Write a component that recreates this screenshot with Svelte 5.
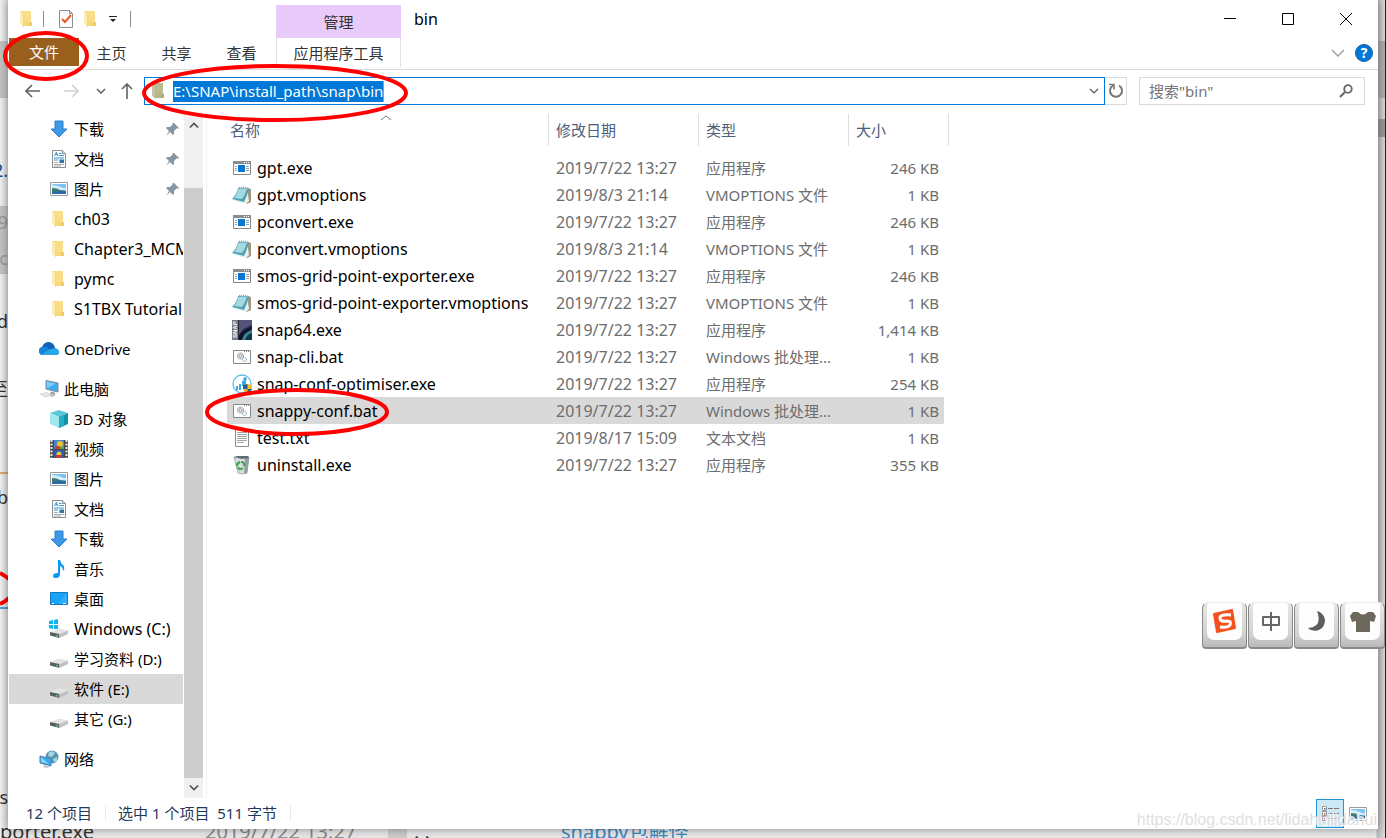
<script>
  const tabs = ['主页', '共享', '查看'];

  const tree = [
    { label: '下载', icon: 'download', pin: true },
    { label: '文档', icon: 'document', pin: true },
    { label: '图片', icon: 'picture', pin: true },
    { label: 'ch03', icon: 'folder', latin: true },
    { label: 'Chapter3_MCMC', icon: 'folder', latin: true },
    { label: 'pymc', icon: 'folder', latin: true },
    { label: 'S1TBX Tutorial', icon: 'folder', latin: true },
    { label: 'OneDrive', icon: 'onedrive', root: true },
    { label: '此电脑', icon: 'computer', root: true },
    { label: '3D 对象', icon: 'cube' },
    { label: '视频', icon: 'video' },
    { label: '图片', icon: 'picture' },
    { label: '文档', icon: 'document' },
    { label: '下载', icon: 'download' },
    { label: '音乐', icon: 'music' },
    { label: '桌面', icon: 'desktop' },
    { label: 'Windows (C:)', icon: 'windrive', latin: true },
    { label: '学习资料 (D:)', icon: 'drive' },
    { label: '软件 (E:)', icon: 'drive', selected: true },
    { label: '其它 (G:)', icon: 'drive' },
    { label: '网络', icon: 'network', root: true }
  ];

  const files = [
    { name: 'gpt.exe', icon: 'exe', date: '2019/7/22 13:27', type: '应用程序', size: '246 KB' },
    { name: 'gpt.vmoptions', icon: 'notepad', date: '2019/8/3 21:14', type: 'VMOPTIONS 文件', size: '1 KB' },
    { name: 'pconvert.exe', icon: 'exe', date: '2019/7/22 13:27', type: '应用程序', size: '246 KB' },
    { name: 'pconvert.vmoptions', icon: 'notepad', date: '2019/8/3 21:14', type: 'VMOPTIONS 文件', size: '1 KB' },
    { name: 'smos-grid-point-exporter.exe', icon: 'exe', date: '2019/7/22 13:27', type: '应用程序', size: '246 KB' },
    { name: 'smos-grid-point-exporter.vmoptions', icon: 'notepad', date: '2019/7/22 13:27', type: 'VMOPTIONS 文件', size: '1 KB' },
    { name: 'snap64.exe', icon: 'snap', date: '2019/7/22 13:27', type: '应用程序', size: '1,414 KB' },
    { name: 'snap-cli.bat', icon: 'bat', date: '2019/7/22 13:27', type: 'Windows 批处理...', size: '1 KB' },
    { name: 'snap-conf-optimiser.exe', icon: 'optimiser', date: '2019/7/22 13:27', type: '应用程序', size: '254 KB' },
    { name: 'snappy-conf.bat', icon: 'bat', date: '2019/7/22 13:27', type: 'Windows 批处理...', size: '1 KB', selected: true },
    { name: 'test.txt', icon: 'text', date: '2019/8/17 15:09', type: '文本文档', size: '1 KB' },
    { name: 'uninstall.exe', icon: 'bin', date: '2019/7/22 13:27', type: '应用程序', size: '355 KB' }
  ];
</script>

{#snippet icon(name)}
  <svg class="icon" viewBox="0 0 20 20" aria-hidden="true">
    {#if name === 'folder'}
      <path d="M3 2h11v11h1v4H6z" fill="#f8d778" />
      <path d="M7 2h7v11H7z" fill="#fadd8a" />
      <path d="M12 13h3v4h-3z" fill="#f2ca66" />
      <path d="M3 2l4 2v14l-4-3z" fill="#fdebb0" />
      <path d="M6.500 4v14" stroke="#f0cd70" stroke-width=".6" />
    {:else if name === 'download'}
      <path d="M6 2h8v8h4l-8 8-8-8h4z" fill="#3d99e8" stroke="#2c7fcb" />
    {:else if name === 'document'}
      <path d="M3.500 1.500h10l3 3v14h-13z" fill="#fbfcfd" stroke="#8d9092" />
      <path d="M13.500 1.500v3h3" fill="#ddd" stroke="#8d9092" />
      <path d="M5.500 7l2-4 1 4M6.500 5.500h2M10 4.500h2.500M10 6.500h5M5 9h10M5 11h4" fill="none" stroke="#3a96d2" />
      <path d="M5 13.500h4M5 15.500h10M5 17h7" stroke="#9a9a9a" stroke-width=".8" />
      <path d="M10.500 10.500H15V14h-4.500z" fill="#37749d" />
    {:else if name === 'picture'}
      <path d="M1.500 3.500h17v13h-17z" fill="#fff" stroke="#9a9da0" />
      <path d="M3 5h14v10H3z" fill="#7fc3f5" />
      <path d="M3 6q5 0 9 2t5 1v2H3z" fill="#d4edfb" />
      <path d="M3 9q5 0 8 2l6 1v3H3z" fill="#3f7b6d" />
      <path d="M3 13q7-2 14 0v2H3z" fill="#2a6ba8" />
    {:else if name === 'onedrive'}
      <path d="M4 16a4 4 0 0 1 0-8q2-5 7-4 4 0 5 5 4 1 4 4 0 3-3 3z" fill="#1490df" />
      <path d="M3 8q2-5 7-5 4 0 6 6l-4 2-5-3z" fill="#0f62b8" />
      <path d="M0 12q0-4 4-4 3 0 6 3l-7 5q-3-1-3-4" fill="#1684d8" />
      <path d="M3 15l9-5q5-2 8 2 0 4-3 4H4z" fill="#28a8ea" />
    {:else if name === 'computer'}
      <path d="M7 1.500l12 2.500v9L7 10z" fill="#3eaaf0" stroke="#7d8a95" />
      <path d="M7.500 2.500l9 2L8 9.500z" fill="#7fcbfa" />
      <path d="M12 12.500l4 1v2.500l-5-1z" fill="#9aa3aa" />
      <path d="M9 16l5-1 3 1-4 2z" fill="#b9c0c5" />
      <path d="M1 15l7-1.500 4 2.500-6 2z" fill="#e3e7ea" stroke="#c0c6ca" stroke-width=".6" />
    {:else if name === 'cube'}
      <path d="M10 1l9 3-9 4-9-4z" fill="#5ac8d8" />
      <path d="M1 4l9 4v11l-9-4z" fill="#a0e8ec" />
      <path d="M10 8l9-4v11l-9 4z" fill="#0c93aa" />
      <path d="M10 8l5-2v11l-5 2z" fill="#26afc4" />
    {:else if name === 'video'}
      <path d="M1 1h18v18H1z" fill="#4a4a4a" />
      <path d="M5 1h10v9H5z" fill="#4a87cf" />
      <path d="M5 11h10v8H5z" fill="#2a5cb4" />
      <path d="M2.500 1v18M17.500 1v18" stroke="#eee" stroke-width="2" stroke-dasharray="2 1.500" />
      <circle cx="11" cy="5" r="3" fill="#e9c52d" /><path d="M6 7h5v3H6z" fill="#d63b29" />
      <circle cx="10" cy="15" r="2.500" fill="#e5c73a" /><path d="M7 16h6v3H7z" fill="#c83b2b" />
      <path d="M11 8h4v2h-4z" fill="#58a845" />
    {:else if name === 'music'}
      <path d="M9 1h2q1 4 4 6 1 3-1 5 0-4-3-5v8q0 4-4 4-3 0-3-2 0-3 5-3z" fill="#0d99ef" />
    {:else if name === 'desktop'}
      <path d="M1.500 3.500h17v12h-17z" fill="#18a4fb" stroke="#1778b8" />
      <path d="M18 4v9L9 15z" fill="#30aeff" />
      <path d="M3 14.500h2M14 14.500h3" stroke="#fff" />
    {:else if name === 'drive' || name === 'windrive'}
      <path d="M1 13l9-3.500 9 2-8 3.500z" fill="#e3e4e6" />
      <path d="M1 13l9.500 2v4L1 16.500z" fill="#5d6063" />
      <path d="M10.500 15l8.500-3.500V15l-8.500 4z" fill="#bfc1c4" />
      <path d="M7 16.500l2 .5" stroke="#46d156" stroke-width="1.500" />
      {#if name === 'windrive'}
        <path d="M0 2l4-1v4H0zM5 1l4-1v5H5zM0 6h4v4l-4-1zM5 6h4v4H5z" fill="#0db5ef" />
      {/if}
    {:else if name === 'network'}
      <circle cx="13" cy="8" r="6.500" fill="#5593b8" />
      <path d="M10 3q4-2 6 1l-3 4-4-1zM14 10l4-2v4l-3 1z" fill="#a9d3df" />
      <path d="M1 7l11 3v7L1 14z" fill="#35aaf3" stroke="#5682a4" />
      <path d="M2 8l8 7-8-2z" fill="#8bd2fb" />
      <path d="M5 16l6 2-3 1-4-1z" fill="#c1c7cb" />
    {:else if name === 'exe'}
      <path d="M1.500 3.500h17v13h-17z" fill="#fff" stroke="#85898c" />
      <path d="M1 3h18v3H1z" fill="#898d90" />
      <path d="M12 4.500h6" stroke="#fff" stroke-dasharray="1 1" />
      <path d="M6 7h7v7H6z" fill="#0877d4" />
      <path d="M3 8.500h2M3 10.500h2M3 12.500h2M14 8.500h3M14 10.500h3M14 12.500h3" stroke="#9d9d9d" />
    {:else if name === 'notepad'}
      <path d="M16 3l3 1v13l-4 2-2-3z" fill="#a3957a" />
      <path d="M15 3l2 13-3 3-12-3-1-2z" fill="#e9f0f2" />
      <path d="M6 3q6-1 11 1-2 7-5 13L0 14q5-5 6-11" fill="#4fa3b5" />
      <path d="M6 4q5-1 9 0-2 6-5 10l-8-1q4-5 4-9" fill="#a5d9e2" />
      <path d="M7 2.500q5-1 10 1" fill="none" stroke="#6b858b" stroke-dasharray="1 1" />
    {:else if name === 'snap'}
      <path d="M0 0h20v20H0z" fill="#282b50" />
      <path d="M7 0h13v5Q12 7 7 15z" fill="#555379" />
      <path d="M7 16q3-7 13-9l-8 13H7z" fill="#10152c" />
      <path d="M10 20q2-8 10-10v10z" fill="#3b8795" />
      <path d="M13 20q2-6 7-7v7z" fill="#123540" />
      <path d="M0 0h6v20H0z" fill="#777c7c" />
      <text transform="rotate(-90)" x="-18" y="5" font-family="Liberation Sans, sans-serif" font-size="6" font-weight="bold" fill="#fff">SNAP</text>
    {:else if name === 'bat'}
      <path d="M1.500 3.500h17v13h-17z" fill="#fff" stroke="#85898c" />
      <path d="M12 4.500h6" stroke="#85898c" stroke-dasharray="1 1" />
      <circle cx="8.500" cy="9" r="3" fill="#eee" stroke="#818487" stroke-dasharray="1.500 .6" /><circle cx="8.500" cy="9" r="1.300" fill="#fff" stroke="#818487" stroke-width=".8" />
      <circle cx="12.500" cy="12.500" r="2" fill="#fff" stroke="#6f9fbd" stroke-dasharray="1.200 .5" />
    {:else if name === 'optimiser'}
      <circle cx="10" cy="10" r="9" fill="#fff" stroke="#5bbdec" stroke-width="1.300" />
      <path d="M4 12h2v4H4zM7 10h2v6H7zM10 7l4-1v6h-4z" fill="#38a9e0" />
      <circle cx="13" cy="5" r="1.800" fill="#38a9e0" />
      <path d="M11 11l4.500-1 4.500 1v4q-1 3-4.500 5-3.500-2-4.500-5z" fill="#f6bd26" />
      <path d="M15.500 10v5H11v-4zM15.500 15H20q-1 3-4.500 5z" fill="#285f93" />
    {:else if name === 'text'}
      <path d="M3.500 1.500h13v17h-13z" fill="#fff" stroke="#898c8e" />
      <path d="M5 4.500h10M5 6.500h10M5 8.500h10M5 10.500h10M5 12.500h10M5 14.500h7" stroke="#a3a3a3" />
    {:else if name === 'bin'}
      <path d="M2 2h15l-2 16q-5 2-9 0z" fill="#d6dde1" stroke="#89939a" stroke-width=".7" />
      <path d="M13 3h4l-2 15-3 1z" fill="#929da5" />
      <path d="M2 2l4-1h10l1 2-7 1z" fill="#5f6d77" />
      <path d="M9 7q4 0 3 4M11 13q-4 3-5-1M5 11q0-3 3-4" fill="none" stroke="#39a63c" stroke-width="2" />
    {/if}
  </svg>
{/snippet}

<div class="desktop">
  <div class="behind" aria-hidden="true">
    <i class="band one"></i><i class="band two"></i><i class="band three"></i><i class="band four"></i>
    <span class="bit blue" style:top="158px">2.</span>
    <span class="bit pale" style:top="210px">9</span>
    <span class="bit pale" style:top="246px">oc</span>
    <span class="bit" style:top="309px">d</span>
    <span class="bit" style:top="377px">至</span>
    <span class="bit" style:top="485px">b</span>
    <span class="bit" style:top="785px">s</span>
    <span class="low name">porter.exe</span>
    <span class="low date">2019/7/22 13:27</span>
    <span class="low dots">. .</span>
    <span class="low link">snappy包解怪</span>
    <i class="track"></i>
    <i class="line orange"></i><i class="line sky"></i>
    <svg class="arc" viewBox="0 0 8 40"><path d="M0 4Q4 6 9 10M0 35Q5 33 9 29" fill="none" stroke="#f00" stroke-width="4" /></svg>
  </div>

  <main class="window">
    <header class="titlebar">
      <div class="quick">
        {@render icon('folder')}
        <i class="sep"></i>
        <button class="plain" aria-label="属性">
          <svg width="16" height="20" viewBox="0 0 16 20"><path d="M1.500 1.500h10l3 3v14h-13z" fill="#f8fafc" stroke="#8c9095" /><path d="M11.500 1.500v3h3" fill="none" stroke="#8c9095" /><path d="M4 10l3 3 6-7" fill="none" stroke="#e95d20" stroke-width="2" /></svg>
        </button>
        <button class="plain" aria-label="新建文件夹">{@render icon('folder')}</button>
        <button class="plain more" aria-label="自定义快速访问工具栏">
          <svg width="8" height="8" viewBox="0 0 8 8"><path d="M0 1.500h8" stroke="#222" /><path d="M1 4h6L4 7z" fill="#222" /></svg>
        </button>
        <i class="sep"></i>
      </div>
      <div class="manage">管理</div>
      <h1>bin</h1>
      <div class="controls">
        <button aria-label="最小化"><svg viewBox="0 0 14 14"><path d="M1 6.500h12" /></svg></button>
        <button aria-label="最大化"><svg viewBox="0 0 14 14"><path d="M1.500 1.500h11v11h-11z" /></svg></button>
        <button aria-label="关闭"><svg viewBox="0 0 14 14"><path d="M1 1l12 12M13 1L1 13" /></svg></button>
      </div>
    </header>

    <nav class="tabs">
      <button class="file">文件</button>
      {#each tabs as tab}<button>{tab}</button>{/each}
      <button class="context">应用程序工具</button>
      <div class="help">
        <button class="plain" aria-label="展开功能区"><svg width="14" height="8" viewBox="0 0 14 8"><path d="M1 1l6 6 6-6" fill="none" stroke="#9c9c9c" stroke-width="1.300" /></svg></button>
        <button class="question" aria-label="帮助">?</button>
      </div>
    </nav>

    <div class="navrow">
      <div class="arrows">
        <button class="plain" aria-label="后退"><svg width="16" height="14" viewBox="0 0 16 14"><path d="M15 7H1M7 1L1 7l6 6" fill="none" stroke="#636363" stroke-width="1.600" /></svg></button>
        <button class="plain forward" aria-label="前进"><svg width="16" height="14" viewBox="0 0 16 14"><path d="M1 7h14M9 1l6 6-6 6" fill="none" stroke="#d2d2d2" stroke-width="1.600" /></svg></button>
        <button class="plain recent" aria-label="最近的位置"><svg width="10" height="6" viewBox="0 0 10 6"><path d="M1 1l4 4 4-4" fill="none" stroke="#666" stroke-width="1.600" /></svg></button>
        <button class="plain up" aria-label="上移"><svg width="12" height="16" viewBox="0 0 12 16"><path d="M6 16V1M1 6l5-5 5 5" fill="none" stroke="#636363" stroke-width="1.600" /></svg></button>
      </div>
      <div class="address">
        <span class="tinted">{@render icon('folder')}</span>
        <input class="path" aria-label="地址" value="E:\SNAP\install_path\snap\bin" />
        <button class="plain drop" aria-label="以前的位置"><svg width="10" height="6" viewBox="0 0 10 6"><path d="M1 1l4 4 4-4" fill="none" stroke="#555" stroke-width="1.200" /></svg></button>
      </div>
      <button class="refresh" aria-label="刷新"><svg width="16" height="16" viewBox="0 0 16 16"><path d="M5 2.500A6 6 0 1 0 11 2.500" fill="none" stroke="#777" stroke-width="2" /><path d="M1 1.500h5v5" fill="none" stroke="#777" stroke-width="1.600" /></svg></button>
      <label class="search">
        <input type="search" aria-label="搜索" placeholder={'搜索"bin"'} />
        <svg width="14" height="14" viewBox="0 0 14 14"><circle cx="9" cy="5" r="3.800" fill="none" stroke="#666" stroke-width="1.800" /><path d="M6 8l-5 5" stroke="#666" stroke-width="2.200" /></svg>
      </label>
    </div>

    <div class="body">
      <aside>
        <ul>
          {#each tree as item}
            <li class:root={item.root} class:selected={item.selected} class:latin={item.latin}>
              {@render icon(item.icon)}
              <span>{item.label}</span>
              {#if item.pin}
                <svg class="pin" viewBox="0 0 14 14"><path d="M8 1l5 5-1 1-1-1-3 3v3l-1 1-3-3-4 4 3-5-3-3 1-1h3l3-3-1-1z" fill="#8796a3" /></svg>
              {/if}
            </li>
          {/each}
        </ul>
      </aside>
      <div class="scroll">
        <button class="plain" aria-label="向上滚动"><svg width="10" height="8" viewBox="0 0 12 8"><path d="M1 7l5-5 5 5" fill="none" stroke="#505050" stroke-width="2" /></svg></button>
        <i></i>
        <button class="plain last" aria-label="向下滚动"><svg width="10" height="8" viewBox="0 0 12 8"><path d="M1 1l5 5 5-5" fill="none" stroke="#505050" stroke-width="2" /></svg></button>
      </div>
      <section>
        <svg class="sort" viewBox="0 0 10 6"><path d="M0 5l5-4 5 4" fill="none" stroke="#777" /></svg>
        <table>
          <colgroup><col class="c-name" /><col class="c-mid" /><col class="c-mid" /><col class="c-size" /><col class="c-end" /></colgroup>
          <thead>
            <tr><th class="first">名称</th><th>修改日期</th><th>类型</th><th colspan="2">大小</th></tr>
          </thead>
          <tbody>
            {#each files as file}
              <tr class:selected={file.selected}>
                <td class="name"><div>{@render icon(file.icon)}<span>{file.name}</span></div></td>
                <td class="when">{file.date}</td>
                <td>{file.type}</td>
                <td class="size">{file.size}</td>
              </tr>
            {/each}
          </tbody>
        </table>
      </section>
    </div>

    <footer>
      <span class="count">12 个项目</span>
      <span class="chosen">选中 1 个项目&nbsp; 511 字节</span>
      <div class="views">
        <button class="details" aria-label="详细信息">
          <svg width="20" height="20" viewBox="0 0 20 20"><path d="M2.500 2.500h4v4h-4zM2.500 7.500h4v4h-4zM2.500 12.500h4v4h-4z" fill="#fff" stroke="#999" /><path d="M4 4h1.500v1.500H4z" fill="#246caa" /><path d="M4 9h1.500v1.500H4z" fill="#b8642a" /><path d="M4 14h1.500v1.500H4z" fill="#d11" /><path d="M8 4.500h11M8 9.500h11M8 14.500h11" stroke="#777" stroke-dasharray="5 1" /></svg>
        </button>
        <button class="plain" aria-label="大图标">{@render icon('picture')}</button>
      </div>
    </footer>
  </main>

  <svg class="marks" aria-hidden="true">
    <ellipse cx="46" cy="56" rx="41" ry="23" />
    <ellipse cx="275" cy="93" rx="131" ry="27" />
    <ellipse cx="297" cy="412" rx="90" ry="22" />
  </svg>

  <div class="ime">
    <button aria-label="输入法"><span><svg viewBox="0 0 28 28"><path d="M3 6l18-4 3 18-18 4z" fill="#f4511e" stroke="#f4511e" stroke-linejoin="round" stroke-width="2" /><path d="M20 7q-11-1-11 3t7 3q5 0 3 4-2 3-10 2" fill="none" stroke="#fff" stroke-width="3" /></svg></span></button>
    <button aria-label="中文"><span><svg viewBox="0 0 28 28"><path d="M6 9h16v8H6zM14 4v19" fill="none" stroke="#666" stroke-width="2" stroke-linejoin="round" /></svg></span></button>
    <button aria-label="半角"><span><svg viewBox="0 0 28 28"><path d="M14 3A10 10 0 1 1 5 20Q20 19 14 3" fill="#5d5d5d" /></svg></span></button>
    <button aria-label="皮肤"><span><svg viewBox="0 0 28 28"><path d="M1 8l3-4h5q5 5 10 0h5l3 4-2 6-4-1v11H7V13l-4 1z" fill="#6c685c" /></svg></span></button>
  </div>

  <div class="watermark">https://blog.csdn.net/lidahuilidahui</div>
</div>

<style>
  :global(body) { margin: 0; }
  * { box-sizing: border-box; }

  .desktop {
    position: relative;
    display: flex;
    min-height: 100vh;
    padding: 0 8px 9px;
    overflow: hidden;
    background: #ebebeb;
    color: #000;
    font: 15px/20px "Noto Sans", "Noto Sans CJK SC", sans-serif;
  }
  button, input { font: inherit; color: inherit; }
  button { padding: 0; border: 0; background: none; }
  svg { display: block; flex: none; }
  .plain { display: flex; align-items: center; justify-content: center; }
  .icon { width: 20px; height: 20px; }

  /* Content of the page that lies under the window */
  .behind { position: absolute; inset: 0; overflow: hidden; border-right: 1px solid #222; background: linear-gradient(to right, #f2f2f2, #dcdcdc 8px, #e8e8e8 9px, #e8e8e8 calc(100% - 9px), #b8b8b8 calc(100% - 8px), #dadada); }
  .behind > * { position: absolute; }
  .band { left: 0; width: 8px; background: #c3c3c3; }
  .one { top: 41px; height: 57px; }
  .two { top: 206px; height: 68px; }
  .three { top: 119px; left: auto; right: 0; height: 18px; background: #989898; }
  .four { top: 41px; left: auto; right: 0; height: 57px; background: #adadad; }
  .bit { right: calc(100% - 8px); font-size: 18px; line-height: 24px; color: #333; }
  .blue { color: #154f8f; }
  .pale { color: #999; }
  .low { bottom: -6px; font-size: 20px; line-height: 24px; white-space: nowrap; color: #333; }
  .name.low { left: 0; }
  .date { left: 205px; color: #888; }
  .dots { left: 414px; }
  .link { left: 561px; color: #3b8bc4; }
  .track { left: 388px; bottom: 0; width: 19px; height: 9px; background: #ccc; }
  .line { left: 0; width: 8px; height: 2px; }
  .orange { top: 472px; background: #d8ab69; }
  .sky { top: 607px; background: #4c9ed2; }
  .arc { left: 0; top: 569px; width: 8px; height: 40px; }

  .window {
    position: relative;
    flex: 1;
    display: flex;
    flex-direction: column;
    min-width: 0;
    background: #fff;
    box-shadow: 0 0 9px rgba(0, 0, 0, .4);
  }

  .titlebar { display: flex; height: 38px; }
  .quick { display: flex; align-items: center; width: 268px; padding-left: 9px; }
  .sep { width: 1px; height: 16px; margin: 0 14px 0 6px; background: #8c8c8c; }
  .quick .plain { margin-right: 7px; }
  .quick .more { margin: 0 7px 0 1px; }
  .manage { width: 125px; margin-top: 5px; padding-top: 7px; background: #e9cbfb; color: #333; text-align: center; }
  h1 { margin: 0 0 0 13px; padding-top: 7px; font-size: 16px; font-weight: 400; line-height: 24px; }
  .controls { display: flex; margin-left: auto; padding-right: 3px; }
  .controls button { width: 58px; display: flex; align-items: center; justify-content: center; }
  .controls svg { width: 14px; height: 14px; fill: none; stroke: #000; }

  .tabs { display: flex; height: 32px; border-bottom: 1px solid #dadbdc; color: #333; }
  .tabs > button { width: 65px; height: 29px; }
  .tabs > .file { width: 70px; height: 28px; margin-left: 1px; background: #98601c; color: #fff; }
  .tabs > .context { width: 125px; height: 29px; margin-left: 2px; border: solid #e2e2e2; border-width: 0 1px; }
  .help { display: flex; align-items: center; gap: 10px; margin-left: auto; padding: 0 5px 1px 0; }
  .question { width: 18px; height: 18px; border: 1px solid #1461a5; border-radius: 50%; background: #0078d7; color: #fff; font-size: 14px; font-weight: 700; line-height: 16px; }

  .navrow { display: flex; align-items: center; height: 42px; padding: 0 13px 0 17px; }
  .arrows { display: flex; align-items: center; width: 119px; }
  .forward { margin-left: 22px; }
  .recent { margin-left: 17px; }
  .up { margin-left: 15px; }
  .address { flex: 1; display: flex; align-items: center; min-width: 0; height: 28px; padding-left: 4px; border: 1px solid #0078d7; }
  .tinted { filter: brightness(.83) saturate(.6) hue-rotate(15deg); }
  .path { field-sizing: content; min-width: 0; height: 21px; margin-left: 4px; padding: 0; border: 0; border-right: 1px solid #e88a30; background: #0078d7; color: #fff; }
  .drop { width: 20px; margin-left: auto; }
  .refresh { display: flex; align-items: center; justify-content: center; width: 22px; height: 28px; border: 1px solid #d9d9d9; border-left: 0; }
  .search { display: flex; align-items: center; width: 226px; height: 28px; margin-left: 12px; padding: 0 11px 0 9px; border: 1px solid #d9d9d9; }
  .search input { flex: 1; min-width: 0; padding: 0; border: 0; outline: 0; background: none; }
  .search input::placeholder { color: #757575; opacity: 1; }

  .body { flex: 1; display: flex; min-height: 0; }
  aside { width: 176px; overflow: hidden; }
  ul { margin: 0; padding: 2px 0 0; list-style: none; }
  li { display: flex; align-items: center; gap: 5px; height: 30px; margin: 0 1px; padding-left: 40px; white-space: nowrap; overflow: hidden; }
  li.root { margin-top: 10px; padding-left: 30px; }
  li.latin { font-size: 16px; }
  li.selected, tr.selected td { background: #d9d9d9; }
  .pin { width: 14px; height: 14px; margin: 0 3px 0 auto; }
  .scroll { display: flex; flex-direction: column; width: 19px; background: #f0f0f0; }
  .scroll .plain { height: 26px; }
  .scroll .last { height: 20px; }
  .scroll i { flex: 1; margin-top: 50px; background: #cdcdcd; }

  section { position: relative; flex: 1; min-width: 0; margin-left: 3px; padding: 2px 0 0 20px; border-left: 1px solid #f0f0f0; }
  .sort { position: absolute; left: 174px; top: 3px; width: 10px; height: 6px; }
  table { width: 722px; border-collapse: separate; border-spacing: 0; table-layout: fixed; }
  .c-name { width: 322px; }
  .c-mid { width: 150px; }
  .c-size { width: 95px; }
  .c-end { width: 5px; }
  th { height: 32px; padding: 0 0 0 7px; border-right: 1px solid #dedede; color: #4c607a; font-weight: 400; text-align: left; }
  th.first { padding-left: 3px; }
  tbody::before { content: ""; display: block; height: 8px; }
  td { height: 27px; padding: 0 0 0 7px; color: #6d6d6d; white-space: nowrap; }
  td.name { padding-left: 5px; color: #000; font-size: 16px; }
  td.when { font-size: 16px; }
  td.name div { display: flex; align-items: center; gap: 5px; }
  td.size { padding: 0 5px 0 0; text-align: right; }

  footer { display: flex; align-items: center; height: 31px; padding: 0 10px 0 18px; color: #1e395b; }
  .count, .chosen { margin-bottom: 2px; padding-right: 13px; border-right: 1px solid #ececec; line-height: 16px; }
  .chosen { padding-left: 12px; }
  .views { display: flex; align-items: center; gap: 4px; margin-left: auto; }
  .details { display: flex; align-items: center; justify-content: center; width: 28px; height: 29px; border: 1px solid #2795d5; background: #cce8f6; }

  .marks { position: absolute; left: 0; top: 0; width: 420px; height: 450px; fill: none; stroke: #f00; stroke-width: 4; pointer-events: none; }

  /* Floating input-method keys */
  .ime { position: absolute; right: 1px; bottom: 189px; display: flex; gap: 1px; }
  .ime button { width: 45px; height: 47px; padding: 0 4px 7px; border: 1px solid #8a8a8a; border-top-color: #eee; border-bottom-width: 2px; border-radius: 6px 6px 4px 4px; background: linear-gradient(#e6e6e2, #d2d2d2 70%, #b9b9b9); }
  .ime span { display: flex; justify-content: center; height: 100%; padding-top: 5px; border-radius: 3px 3px 7px 7px; background: #fdfdfd; }
  .ime svg { width: 28px; height: 28px; }

  .watermark { position: absolute; right: 9px; bottom: 8px; color: #e0e0e0; font: 16px/20px "Liberation Sans", sans-serif; text-shadow: 1px 1px 0 #fff; pointer-events: none; }
</style>
